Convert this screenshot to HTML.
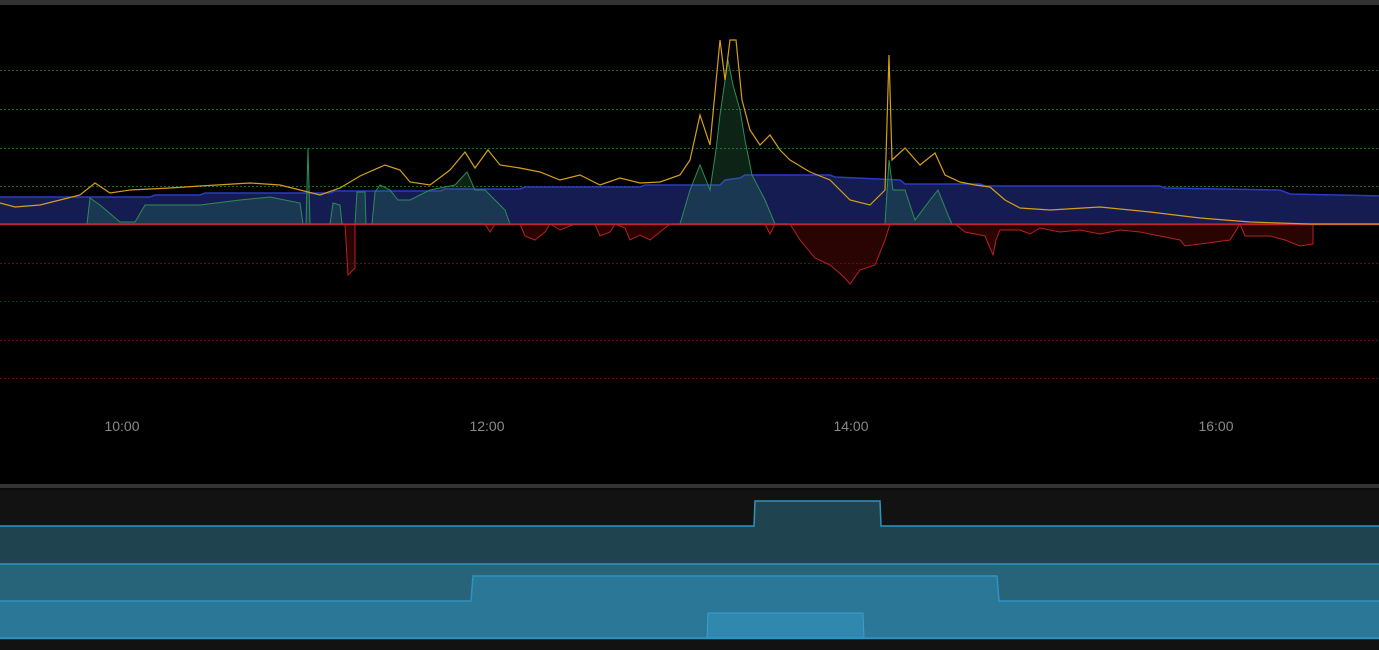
<!DOCTYPE html>
<html><head><meta charset="utf-8"><style>
html,body{margin:0;padding:0;background:#000;width:1379px;height:650px;overflow:hidden;font-family:"Liberation Sans",sans-serif}
</style></head><body>
<svg width="1379" height="650" viewBox="0 0 1379 650" xmlns="http://www.w3.org/2000/svg" style="display:block">
<rect x="0" y="0" width="1379" height="650" fill="#000"/>
<rect x="0" y="0" width="1379" height="5" fill="#333"/>
<g stroke-dasharray="2,2" stroke-width="1">
<line x1="0" y1="70.5" x2="1379" y2="70.5" stroke="#1f6a1f"/>
<line x1="0" y1="109.5" x2="1379" y2="109.5" stroke="#1f6a1f"/>
<line x1="0" y1="148.5" x2="1379" y2="148.5" stroke="#1f6a1f"/>
<line x1="0" y1="186.5" x2="1379" y2="186.5" stroke="#1f6a1f"/>
<line x1="0" y1="263.5" x2="1379" y2="263.5" stroke="#5a1010"/>
<line x1="0" y1="301.5" x2="1379" y2="301.5" stroke="#5a1010"/>
<line x1="0" y1="340.5" x2="1379" y2="340.5" stroke="#5a1010"/>
<line x1="0" y1="378.5" x2="1379" y2="378.5" stroke="#5a1010"/>
</g>
<path d="M-5,197 L150,197 L155,195 L200,195 L205,193 L330,193 L335,191 L440,191 L445,189 L520,189 L525,187 L640,187 L645,185 L720,185 L725,180 L740,178 L745,175 L830,175 L835,177 L900,180 L905,184 L980,184 L985,186 L1160,186 L1165,188 L1280,190 L1290,194 L1385,196 L1385,224 L-5,224 Z" fill="#141c52" stroke="#2a3bc4" stroke-width="1.5"/>
<path d="M0,224 L87,224 L90,198 L100,205 L120,222 L135,222 L145,205 L200,205 L240,200 L270,197 L300,203 L303,224 L306,224 L308,148 L310,224 L330,224 L333,203 L340,205 L342,224 L355,224 L357,192 L365,192 L366,224 L372,224 L375,192 L380,185 L390,190 L398,200 L410,200 L430,190 L455,185 L467,172 L475,190 L485,190 L495,200 L505,210 L510,224 L680,224 L690,190 L700,165 L710,190 L716,150 L720,115 L728,60 L733,85 L740,110 L745,140 L752,175 L765,200 L775,224 L885,224 L889,160 L893,190 L905,190 L915,220 L930,200 L938,190 L948,215 L952,224 Z" fill="rgba(46,139,87,0.25)" stroke="#2e8b57" stroke-width="1"/>
<g fill="rgba(120,10,10,0.35)" stroke="#b22222" stroke-width="1">
<path d="M345,224 L348,275 L355,268 L355,224 Z"/>
<path d="M485,224 L490,232 L495,224 L520,224 L525,236 L535,240 L545,232 L550,224 L560,230 L575,224 L595,224 L600,236 L610,232 L615,224 L625,228 L630,240 L640,235 L650,240 L660,232 L670,224 Z"/>
<path d="M765,224 L770,234 L775,224 Z"/>
<path d="M790,224 L800,240 L815,258 L830,265 L845,278 L850,284 L860,270 L875,265 L885,240 L890,224 Z"/>
<path d="M955,224 L965,232 L985,236 L993,255 L996,240 L1000,230 L1020,230 L1030,234 L1040,228 L1060,232 L1080,230 L1100,234 L1120,230 L1140,232 L1160,236 L1180,240 L1185,246 L1200,244 L1230,240 L1240,224 L1245,236 L1270,236 L1285,240 L1300,246 L1313,244 L1313,224 Z"/>
</g>
<line x1="0" y1="224.5" x2="1379" y2="224.5" stroke="#c0232a" stroke-width="1.5"/>
<polyline fill="none" stroke="#d4a017" stroke-width="1.2" points="0,203 15,207 40,205 60,200 80,195 95,183 110,193 130,190 170,188 200,186 250,183 280,185 300,190 320,195 340,188 360,176 385,165 400,170 410,182 430,185 450,170 465,152 475,168 488,150 500,165 520,168 540,172 560,180 580,175 600,185 620,178 640,183 660,182 680,175 690,160 700,115 710,145 720,40 725,80 730,40 736,40 742,100 750,130 760,145 770,135 780,150 790,160 810,172 830,180 850,200 870,205 885,190 889,55 892,160 905,148 920,165 935,153 945,175 960,182 975,185 990,187 1005,200 1020,208 1050,210 1100,207 1150,212 1200,218 1250,222 1310,224 1379,224"/>
<g fill="#888" font-size="14" text-anchor="middle">
<text x="122" y="431">10:00</text>
<text x="487" y="431">12:00</text>
<text x="851" y="431">14:00</text>
<text x="1216" y="431">16:00</text>
</g>
<rect x="0" y="484" width="1379" height="4" fill="#333"/>
<rect x="0" y="488" width="1379" height="2" fill="#0a0a0a"/>
<rect x="0" y="490" width="1379" height="160" fill="#121212"/>
<path d="M-5,526 L754,526 L755,501 L880,501 L881,526 L1385,526 L1385,638 L-5,638 Z" fill="#20444f" stroke="#2f92c0" stroke-width="1.5"/>
<rect x="0" y="564" width="1379" height="74" fill="#286479"/>
<line x1="0" y1="564" x2="1379" y2="564" stroke="#2f92c0" stroke-width="1.5"/>
<path d="M-5,601 L471,601 L473,576 L997,576 L999,601 L1385,601 L1385,638 L-5,638 Z" fill="#2a7797" stroke="#2f92c0" stroke-width="1.5"/>
<path d="M707,638 L708,613 L863,613 L864,638 Z" fill="#2f88ad" stroke="#3a9fcc" stroke-width="1"/>
<line x1="0" y1="638.5" x2="1379" y2="638.5" stroke="#2f92c0" stroke-width="1.5"/>
</svg>
</body></html>
